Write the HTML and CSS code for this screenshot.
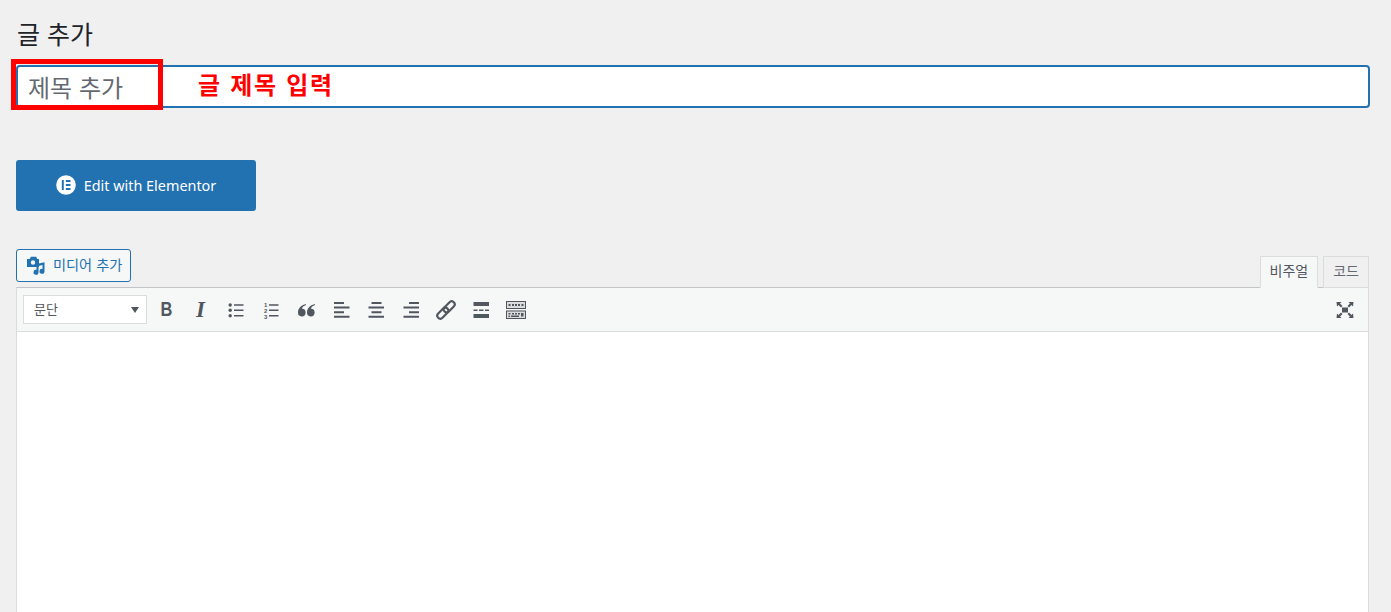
FILE: index.html
```html
<!DOCTYPE html>
<html lang="ko">
<head>
    <meta charset="UTF-8">
    <title>글 추가</title>
    <link rel="stylesheet" href="styles.css">
</head>
<body>
    <div class="wrap">
        <h1 class="page-title">글 추가</h1>

        <div class="title-field">
            <input class="title-input" type="text" placeholder="제목 추가">
            <div class="mark-box"></div>
            <div class="mark-label">글 제목 입력</div>
        </div>

        <button class="elementor-btn">
            <svg class="elementor-logo" width="20" height="20" viewBox="0 0 20 20">
                <path fill="#fff" fill-rule="evenodd" d="M10 .2a9.800 9.800 0 1 0 0 19.600 9.800 9.800 0 0 0 0-19.600zM5.800 5h2v10h-2zM9.800 5h4.700v1.900H9.800zM9.800 9.050h4.700v1.900H9.800zM9.800 13.100h4.700V15H9.800z"/>
            </svg>
            Edit with Elementor
        </button>

        <div class="editor-head">
            <button class="media-btn">
                <svg width="20" height="20" viewBox="0 0 20 20">
                    <path fill="#2271b1" fill-rule="evenodd" d="M1 3h2.800l1-2.200h5.400l1 2.200H13v8H1zM7 4.300a2.200 2.200 0 1 0 0 4.400 2.200 2.200 0 0 0 0-4.400z"/>
                    <path fill="#2271b1" d="M10.500 8l8-1.700v9a2.500 2.500 0 1 1-2-2.400v-3.900l-4 .9v6.300a2.500 2.500 0 1 1-2-2.400z"/>
                </svg>
                <span class="media-label">미디어 추가</span>
            </button>
            <div class="tabs">
                <div class="tab active">비주얼</div>
                <div class="tab">코드</div>
            </div>
        </div>

        <div class="editor">
            <div class="toolbar">
                <div class="format-select">문단<span class="caret"></span></div>
                <div class="tool text-tool bold">B</div>
                <div class="tool text-tool italic">I</div>
                <div class="tool">
                    <svg width="20" height="20" viewBox="0 0 20 20" fill="#50575e">
                        <circle cx="4.200" cy="5" r="1.700"/><circle cx="4.200" cy="10.300" r="1.700"/><circle cx="4.200" cy="15.700" r="1.700"/>
                        <path d="M8 4.300h9.500v1.500H8zM8 9.600h9.500v1.500H8zM8 15h9.500v1.500H8z"/>
                    </svg>
                </div>
                <div class="tool">
                    <svg width="20" height="20" viewBox="0 0 20 20" fill="#50575e">
                        <text class="list-num" x="3" y="6.500">1</text>
                        <text class="list-num" x="3" y="12.500">2</text>
                        <text class="list-num" x="3" y="18.500">3</text>
                        <path d="M8 4.300h9.500v1.500H8zM8 9.600h9.500v1.500H8zM8 15h9.500v1.500H8z"/>
                    </svg>
                </div>
                <div class="tool">
                    <svg width="20" height="20" viewBox="0 0 20 20" fill="#50575e">
                        <path d="M10 4C6 5 2 7.500 2 12.500a3.800 3.800 0 1 0 4-3.700c.2-1.800 1.800-3 3.800-3.500z"/>
                        <path d="M19 4c-4 1-8 3.500-8 8.500a3.800 3.800 0 1 0 4-3.700c.2-1.800 1.800-3 3.800-3.500z"/>
                    </svg>
                </div>
                <div class="tool">
                    <svg width="20" height="20" viewBox="0 0 20 20" fill="#50575e">
                        <path d="M3 2h10v2H3zM3 6.600h15.500v2H3zM3 11.200h10v2H3zM3 15.800h15.500v2H3z"/>
                    </svg>
                </div>
                <div class="tool">
                    <svg width="20" height="20" viewBox="0 0 20 20" fill="#50575e">
                        <path d="M5.500 2h10v2h-10zM2.500 6.600h15.500v2H2.500zM5.500 11.200h10v2h-10zM2.500 15.800h15.500v2H2.500z"/>
                    </svg>
                </div>
                <div class="tool">
                    <svg width="20" height="20" viewBox="0 0 20 20" fill="#50575e">
                        <path d="M8 2h10v2H8zM2.500 6.600h15.500v2H2.500zM8 11.200h10v2H8zM2.500 15.800h15.500v2H2.500z"/>
                    </svg>
                </div>
                <div class="tool">
                    <svg class="nudge" width="20" height="20" viewBox="0 0 20 20" fill="none" stroke="#50575e" stroke-width="2.200">
                        <g transform="rotate(-45 10 10)">
                            <rect x="-1" y="7" width="13" height="6" rx="3"/>
                            <rect x="8" y="7" width="13" height="6" rx="3"/>
                        </g>
                    </svg>
                </div>
                <div class="tool">
                    <svg width="20" height="20" viewBox="0 0 20 20" fill="#50575e">
                        <path d="M2.500 2h15.500v4H2.500zM2.500 9.500h4v1.500h-4zM8 9.500h4.500v1.500H8zM14 9.500h4v1.500h-4zM2.500 14h15.500v4H2.500z"/>
                    </svg>
                </div>
                <div class="tool">
                    <svg width="22" height="20" viewBox="0 0 22 20">
                        <path fill="#dcdcde" d="M1 1h20v8H1zM1 10.500h20V19H1z"/>
                        <path fill="#50575e" fill-rule="evenodd" d="M1 1h20v8H1zM2 2v6h18V2zM1 10.500h20V19H1zM2 11.500V18h18v-6.500z"/>
                        <path fill="#50575e" d="M3.500 4h2v2h-2zM7 4h2v2H7zM10 4h2v2h-2zM13 4h2v2h-2zM16.500 4h2v2h-2zM3.500 13h2v1.500h-2zM7 13h2v1.500H7zM10 13h2v1.500h-2zM13 13h2v1.500h-2zM16 13h2.500v3.500H16zM6 15.500h8V17H6zM3.500 15.500H5V17H3.500z"/>
                    </svg>
                </div>
                <div class="tool fullscreen">
                    <svg width="20" height="20" viewBox="0 0 20 20" fill="#50575e">
                        <path d="M7 7.500h6v5H7z"/>
                        <path d="M1.500 2h5L5 3.500 7.500 6 6 7.500 3.500 5 2 6.500zM18.500 2h-5L15 3.500 12.500 6 14 7.500 16.500 5 18 6.500zM1.500 18h5L5 16.500 7.500 14 6 12.500 3.500 15 2 13.500zM18.500 18h-5l1.500-1.500-2.500-2.500 1.500-1.500 2.500 2.500 1.500-1.500z"/>
                    </svg>
                </div>
            </div>
            <div class="edit-area"></div>
        </div>
    </div>
</body>
</html>
```

FILE: styles.css
```css
* {
    margin: 0;
    padding: 0;
    box-sizing: border-box;
}

html, body {
    height: 100%;
    overflow: hidden;
}

body {
    background-color: #f0f0f1;
    color: #1d2327;
    font-family: "Noto Sans", "Noto Sans CJK KR", sans-serif;
    font-size: 13px;
}

.wrap {
    padding: 0 22px 0 16px;
}

.page-title {
    font-family: "Noto Sans CJK KR", sans-serif;
    font-size: 25px;
    font-weight: 400;
    line-height: 30px;
    padding-top: 18px;
    padding-left: 1px;
    height: 65px;
}

.title-field {
    position: relative;
    margin-right: -1px;
}

.title-input {
    display: block;
    width: 100%;
    height: 43px;
    padding: 0 10px;
    border: 2px solid #2271b1;
    border-radius: 4px;
    background: #fff;
    outline: none;
    font-family: "Noto Sans CJK KR", sans-serif;
    font-size: 24px;
}

.title-input::placeholder {
    color: #646970;
    opacity: 1;
}

.mark-box {
    position: absolute;
    left: -5px;
    top: -6px;
    width: 152px;
    height: 51px;
    border: 5px solid #ff0000;
}

.mark-label {
    position: absolute;
    left: 182px;
    top: 1px;
    color: #ff0000;
    font-family: "Noto Sans CJK KR", sans-serif;
    font-size: 24px;
    font-weight: 700;
    line-height: 36px;
    letter-spacing: 1.7px;
}

.elementor-btn {
    display: flex;
    align-items: center;
    justify-content: center;
    gap: 8px;
    width: 240px;
    height: 51px;
    margin-top: 52px;
    border: none;
    border-radius: 3px;
    background-color: #2271b1;
    color: #fff;
    font-family: "Noto Sans", sans-serif;
    font-size: 14.4px;
}

.elementor-logo {
    margin-top: -2px;
}

.editor-head {
    display: flex;
    justify-content: space-between;
    align-items: flex-end;
    height: 76px;
}

.media-btn {
    display: flex;
    align-items: center;
    gap: 7px;
    height: 33px;
    width: 115px;
    margin-bottom: 5px;
    padding-left: 9px;
    border: 1px solid #2271b1;
    border-radius: 3px;
    background-color: #f6f7f7;
    color: #2271b1;
    font-family: "Noto Sans CJK KR", sans-serif;
    font-size: 14.2px;
}

.media-label {
    margin-bottom: 3px;
}

.tabs {
    display: flex;
    gap: 5px;
    position: relative;
    top: 1px;
}

.tab {
    height: 32px;
    padding: 0 9px;
    border: 1px solid #dcdcde;
    background-color: #f0f0f1;
    color: #646970;
    font-family: "Noto Sans CJK KR", sans-serif;
    font-size: 14px;
    line-height: 26px;
}

.tab.active {
    background-color: #f6f7f7;
    border-bottom-color: #f6f7f7;
    color: #50575e;
}

.editor {
    border: 1px solid #dcdcde;
    border-top-color: #c3c4c7;
    border-bottom: none;
}

.toolbar {
    display: flex;
    align-items: center;
    height: 44px;
    padding-left: 6px;
    background-color: #f6f7f7;
    border-bottom: 1px solid #dcdcde;
}

.format-select {
    position: relative;
    width: 124px;
    height: 29px;
    margin-right: 1px;
    padding-left: 10px;
    border: 1px solid #dcdcde;
    background-color: #fff;
    color: #50575e;
    font-family: "Noto Sans CJK KR", sans-serif;
    font-size: 13px;
    line-height: 25px;
}

.caret {
    position: absolute;
    right: 7px;
    top: 11px;
    border-top: 6px solid #50575e;
    border-left: 4px solid transparent;
    border-right: 4px solid transparent;
}

.tool {
    display: flex;
    align-items: center;
    justify-content: center;
    width: 35px;
    height: 30px;
    color: #50575e;
}

.text-tool {
    font-family: "Liberation Sans", sans-serif;
    font-size: 20px;
    font-weight: 700;
}

.bold {
    transform: translateX(1px) scaleX(0.82);
}

.italic {
    font-family: "Liberation Serif", serif;
    font-style: italic;
    font-size: 23px;
}

.list-num {
    font-family: "Liberation Sans", sans-serif;
    font-size: 6px;
    font-weight: 700;
}

.nudge {
    margin-left: 1px;
}

.fullscreen {
    margin-left: auto;
    margin-right: 6px;
}

.edit-area {
    height: 280px;
    background-color: #fff;
}
```
